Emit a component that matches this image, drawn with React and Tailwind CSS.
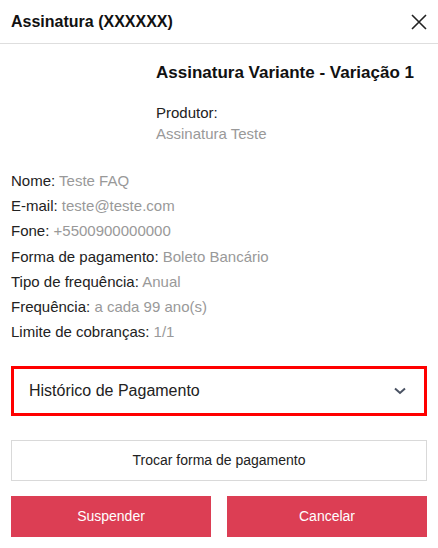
import React from "react";

const infos = [
  ["Nome", "Teste FAQ"],
  ["E-mail", "teste@teste.com"],
  ["Fone", "+5500900000000"],
  ["Forma de pagamento", "Boleto Bancário"],
  ["Tipo de frequência", "Anual"],
  ["Frequência", "a cada 99 ano(s)"],
  ["Limite de cobranças", "1/1"],
];

const App = () => {
  return (
    <div
      className="w-[438px] h-[548px] bg-white text-[#222] overflow-hidden"
      style={{ fontFamily: '"Liberation Sans", Arial, sans-serif' }}
    >
      {/* Header */}
      <div className="h-[44px] flex items-center justify-between pl-[11px] pr-[11px] border-b border-[#dedede]">
        <h1 className="text-[16px] font-bold text-[#111]">Assinatura (XXXXXX)</h1>
        <button className="text-[#222]">
          <svg width="16" height="16" viewBox="0 0 16 16" fill="none">
            <path d="M1 1L15 15M15 1L1 15" stroke="currentColor" strokeWidth="1.6" />
          </svg>
        </button>
      </div>

      {/* Product */}
      <div className="pl-[156px] pt-[19px]">
        <h2 className="text-[17px] font-bold text-[#111] leading-[20px]">
          Assinatura Variante - Variação 1
        </h2>
        <div className="mt-[19px] text-[15px] leading-[21px]">
          <p className="text-[#222]">Produtor:</p>
          <p className="text-[#999]">Assinatura Teste</p>
        </div>
      </div>

      {/* Info */}
      <div className="px-[11px] pt-[24px] text-[15px] leading-[25.2px]">
        {infos.map(([label, value]) => (
          <p key={label}>
            <span className="text-[#222]">{label}:</span>{" "}
            <span className="text-[#999]">{value}</span>
          </p>
        ))}
      </div>

      {/* Actions */}
      <div className="px-[11px] pt-[22px] flex flex-col">
        <div className="h-[50px] border-[3px] border-[#ff0000] flex items-center justify-between pl-[15px] pr-[18px]">
          <span className="text-[16px] text-[#222]">Histórico de Pagamento</span>
          <svg width="12" height="8" viewBox="0 0 12 8" fill="none" className="text-[#4a5263]">
            <path d="M1 1.5L6 6L11 1.5" stroke="currentColor" strokeWidth="2" />
          </svg>
        </div>

        <button className="mt-[24px] h-[41px] border border-[#d9d9d9] text-[14px] text-[#222] bg-white">
          Trocar forma de pagamento
        </button>

        <div className="mt-[15px] grid grid-cols-2 gap-[16px]">
          <button className="h-[41px] bg-[#dc3e54] text-white text-[14px]">Suspender</button>
          <button className="h-[41px] bg-[#dc3e54] text-white text-[14px]">Cancelar</button>
        </div>
      </div>
    </div>
  );
};

export default App;
